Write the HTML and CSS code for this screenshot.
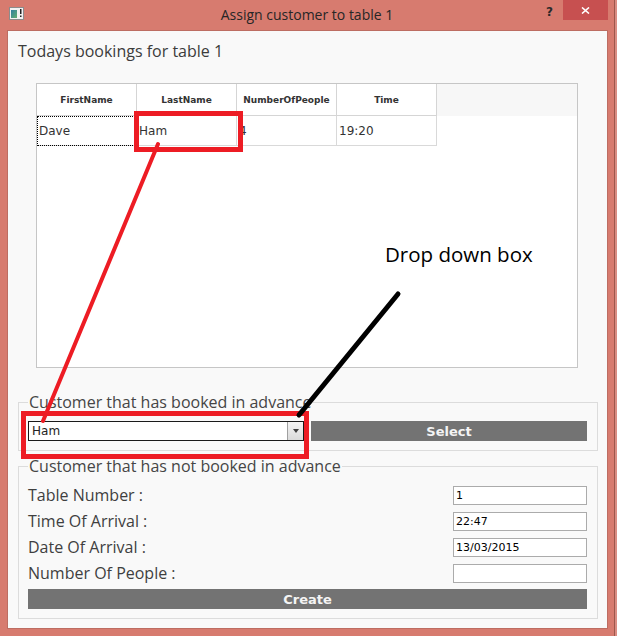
FILE: index.html
```html
<!DOCTYPE html>
<html>
<head>
<meta charset="utf-8">
<title>Assign customer to table 1</title>
<link rel="stylesheet" href="styles.css">
</head>
<body>
<div class="screen">
  <div class="window">
    <div class="titlebar">
      <div class="tb-left">
        <svg class="app-icon" viewBox="0 0 15 13">
          <defs>
            <linearGradient id="ig" x1="0" y1="0" x2="1" y2="1">
              <stop offset="0" stop-color="#2f7fa0"/>
              <stop offset="1" stop-color="#62b070"/>
            </linearGradient>
          </defs>
          <rect x="0.5" y="0.5" width="14" height="12" fill="#f2f2f2" stroke="#8c8c8c"/>
          <rect x="2" y="3" width="6" height="8" fill="url(#ig)"/>
          <rect x="11" y="2" width="1.5" height="5" fill="#222"/>
          <rect x="11" y="8.5" width="1.5" height="1.5" fill="#222"/>
        </svg>
      </div>
      <div class="tb-title">Assign customer to table 1</div>
      <div class="tb-right">
        <span class="help">?</span>
        <button class="close" type="button">
          <svg viewBox="0 0 9 7"><path d="M1 0.5 L8 6.5 M8 0.5 L1 6.5" stroke="#fff" stroke-width="1.6" fill="none"/></svg>
        </button>
      </div>
    </div>
    <div class="content">
      <h1 class="heading">Todays bookings for table 1</h1>
      <div class="tableview">
        <div class="thead">
          <div class="th">FirstName</div>
          <div class="th">LastName</div>
          <div class="th">NumberOfPeople</div>
          <div class="th">Time</div>
          <div class="th-fill"></div>
        </div>
        <div class="trow">
          <div class="td current">Dave</div>
          <div class="td">Ham</div>
          <div class="td">4</div>
          <div class="td">19:20</div>
        </div>
      </div>
      <fieldset class="group g1">
        <legend>Customer that has booked in advance</legend>
        <div class="pick">
          <div class="combo"><span>Ham</span><span class="arrow"></span></div>
          <button class="btn" type="button">Select</button>
        </div>
      </fieldset>
      <fieldset class="group g2">
        <legend>Customer that has not booked in advance</legend>
        <div class="form">
          <div class="field"><label>Table Number :</label><input class="input" type="text" value="1" readonly></div>
          <div class="field"><label>Time Of Arrival :</label><input class="input" type="text" value="22:47" readonly></div>
          <div class="field"><label>Date Of Arrival :</label><input class="input" type="text" value="13/03/2015" readonly></div>
          <div class="field"><label>Number Of People :</label><input class="input" type="text" value="" readonly></div>
        </div>
        <button class="btn create" type="button">Create</button>
      </fieldset>
    </div>
  </div>
  <div class="edge"></div>

  <svg class="annotations" viewBox="0 0 617 636">
    <rect x="136.5" y="113.5" width="104" height="36" fill="none" stroke="#ed1c24" stroke-width="5"/>
    <rect x="23.5" y="413.5" width="283" height="43" fill="none" stroke="#ed1c24" stroke-width="5"/>
    <line x1="158" y1="144" x2="43" y2="421" stroke="#ed1c24" stroke-width="4" stroke-linecap="round"/>
    <line x1="398" y1="294" x2="299" y2="415" stroke="#000" stroke-width="5" stroke-linecap="round"/>
  </svg>
  <div class="note">Drop down box</div>
</div>
</body>
</html>
```

FILE: styles.css
```css
* { box-sizing: border-box; }

body {
  margin: 0;
  background: #d77b6f;
  font-family: "Open Sans", sans-serif;
}

.screen {
  position: relative;
  width: 617px;
  height: 636px;
  display: flex;
  overflow: hidden;
}

.window {
  width: 614px;
  height: 636px;
  background: #d77b6f;
}

.edge {
  width: 3px;
  background: #d98c82;
  border-left: 1px solid #9e564c;
}

/* title bar */
.titlebar {
  height: 30px;
  display: grid;
  grid-template-columns: 1fr auto 1fr;
  align-items: start;
}
.tb-left { padding: 7px 0 0 9px; }
.app-icon { display: block; width: 15px; height: 13px; }
.tb-title {
  padding-top: 5px;
  font-size: 14px;
  line-height: 20px;
  color: #262626;
}
.tb-right {
  display: flex;
  justify-content: flex-end;
  align-items: flex-start;
  padding-right: 6px;
}
.help {
  font-family: "DejaVu Sans", sans-serif;
  font-weight: bold;
  font-size: 12px;
  line-height: 12px;
  margin-top: 6px;
  margin-right: 10px;
  color: #2a2a2a;
}
.close {
  width: 45px;
  height: 20px;
  background: #c75050;
  border: 0;
  padding: 0;
  display: flex;
  align-items: center;
  justify-content: center;
}
.close svg { width: 9px; height: 7px; display: block; }

/* client area */
.content {
  margin-left: 7px;
  width: 601px;
  height: 599px;
  background: #f9f9f9;
  border: 1px solid #bd6d62;
  padding: 9px 9px 0 10px;
}
.heading {
  margin: 0;
  font-weight: normal;
  font-size: 16px;
  line-height: 22px;
  color: #3c3c3c;
}

.tableview {
  margin: 21px 0 0 18px;
  width: 542px;
  height: 285px;
  background: #fff;
  border: 1px solid #c6c6c6;
}
.thead, .trow { display: flex; }
.th {
  width: 100px;
  height: 32px;
  border-right: 1px solid #d5d5d5;
  border-bottom: 1px solid #d5d5d5;
  display: flex;
  align-items: center;
  justify-content: center;
  font-family: "DejaVu Sans", sans-serif;
  font-weight: bold;
  font-size: 9px;
  color: #333;
}
.th-fill {
  flex: 1;
  height: 32px;
  background: #f7f7f7;
}
.td {
  width: 100px;
  height: 30px;
  border-right: 1px solid #d9d9d9;
  border-bottom: 1px solid #d9d9d9;
  display: flex;
  align-items: center;
  padding-left: 2px;
  font-family: "DejaVu Sans", sans-serif;
  font-size: 12px;
  color: #333;
}
.td.current {
  outline: 1px dotted #000;
  outline-offset: -1px;
}

/* group boxes */
.group {
  margin: 23px 0 0 0;
  border: 1px solid #dcdcdc;
  padding: 8px 10px 9px 9px;
  min-width: 0;
}
.group legend {
  padding: 0 1px;
  font-size: 16px;
  line-height: 22px;
  color: #454545;
}
.g2 {
  margin-top: 4px;
  padding-top: 9px;
}

.pick {
  display: grid;
  grid-template-columns: 1fr 1fr;
  gap: 7px;
}
.combo {
  height: 20px;
  background: #fff;
  border: 1px solid #1a1a1a;
  display: flex;
  align-items: center;
  justify-content: space-between;
  padding-left: 3px;
  font-family: "DejaVu Sans", sans-serif;
  font-size: 12px;
  color: #222;
}
.arrow {
  width: 16px;
  height: 18px;
  background: linear-gradient(#f4f4f4, #dadada);
  border-left: 1px solid #a0a0a0;
  display: flex;
  align-items: center;
  justify-content: center;
}
.arrow::after {
  content: "";
  border-left: 3.5px solid transparent;
  border-right: 3.5px solid transparent;
  border-top: 4px solid #404040;
}

.btn {
  height: 20px;
  background: #737373;
  color: #f4f4f4;
  border: 0;
  padding: 0;
  font-family: "DejaVu Sans", sans-serif;
  font-weight: bold;
  font-size: 13px;
}

.form {
  display: flex;
  flex-direction: column;
  gap: 7px;
}
.field {
  display: flex;
  justify-content: space-between;
  align-items: center;
}
.field label {
  font-size: 16px;
  line-height: 19px;
  color: #3f3f3f;
}
.input {
  width: 134px;
  height: 19px;
  margin: 0;
  border: 1px solid #ababab;
  background: #fff;
  padding: 0 2px;
  font-family: "DejaVu Sans", sans-serif;
  font-size: 11px;
  color: #000;
  outline: none;
}
.create {
  display: block;
  width: 100%;
  margin-top: 6px;
}

/* annotations drawn over the screenshot */
.annotations {
  position: absolute;
  left: 0;
  top: 0;
  width: 617px;
  height: 636px;
  pointer-events: none;
}
.note {
  position: absolute;
  left: 385px;
  top: 240px;
  font-size: 20.5px;
  line-height: 28px;
  color: #000;
  white-space: nowrap;
}
```
